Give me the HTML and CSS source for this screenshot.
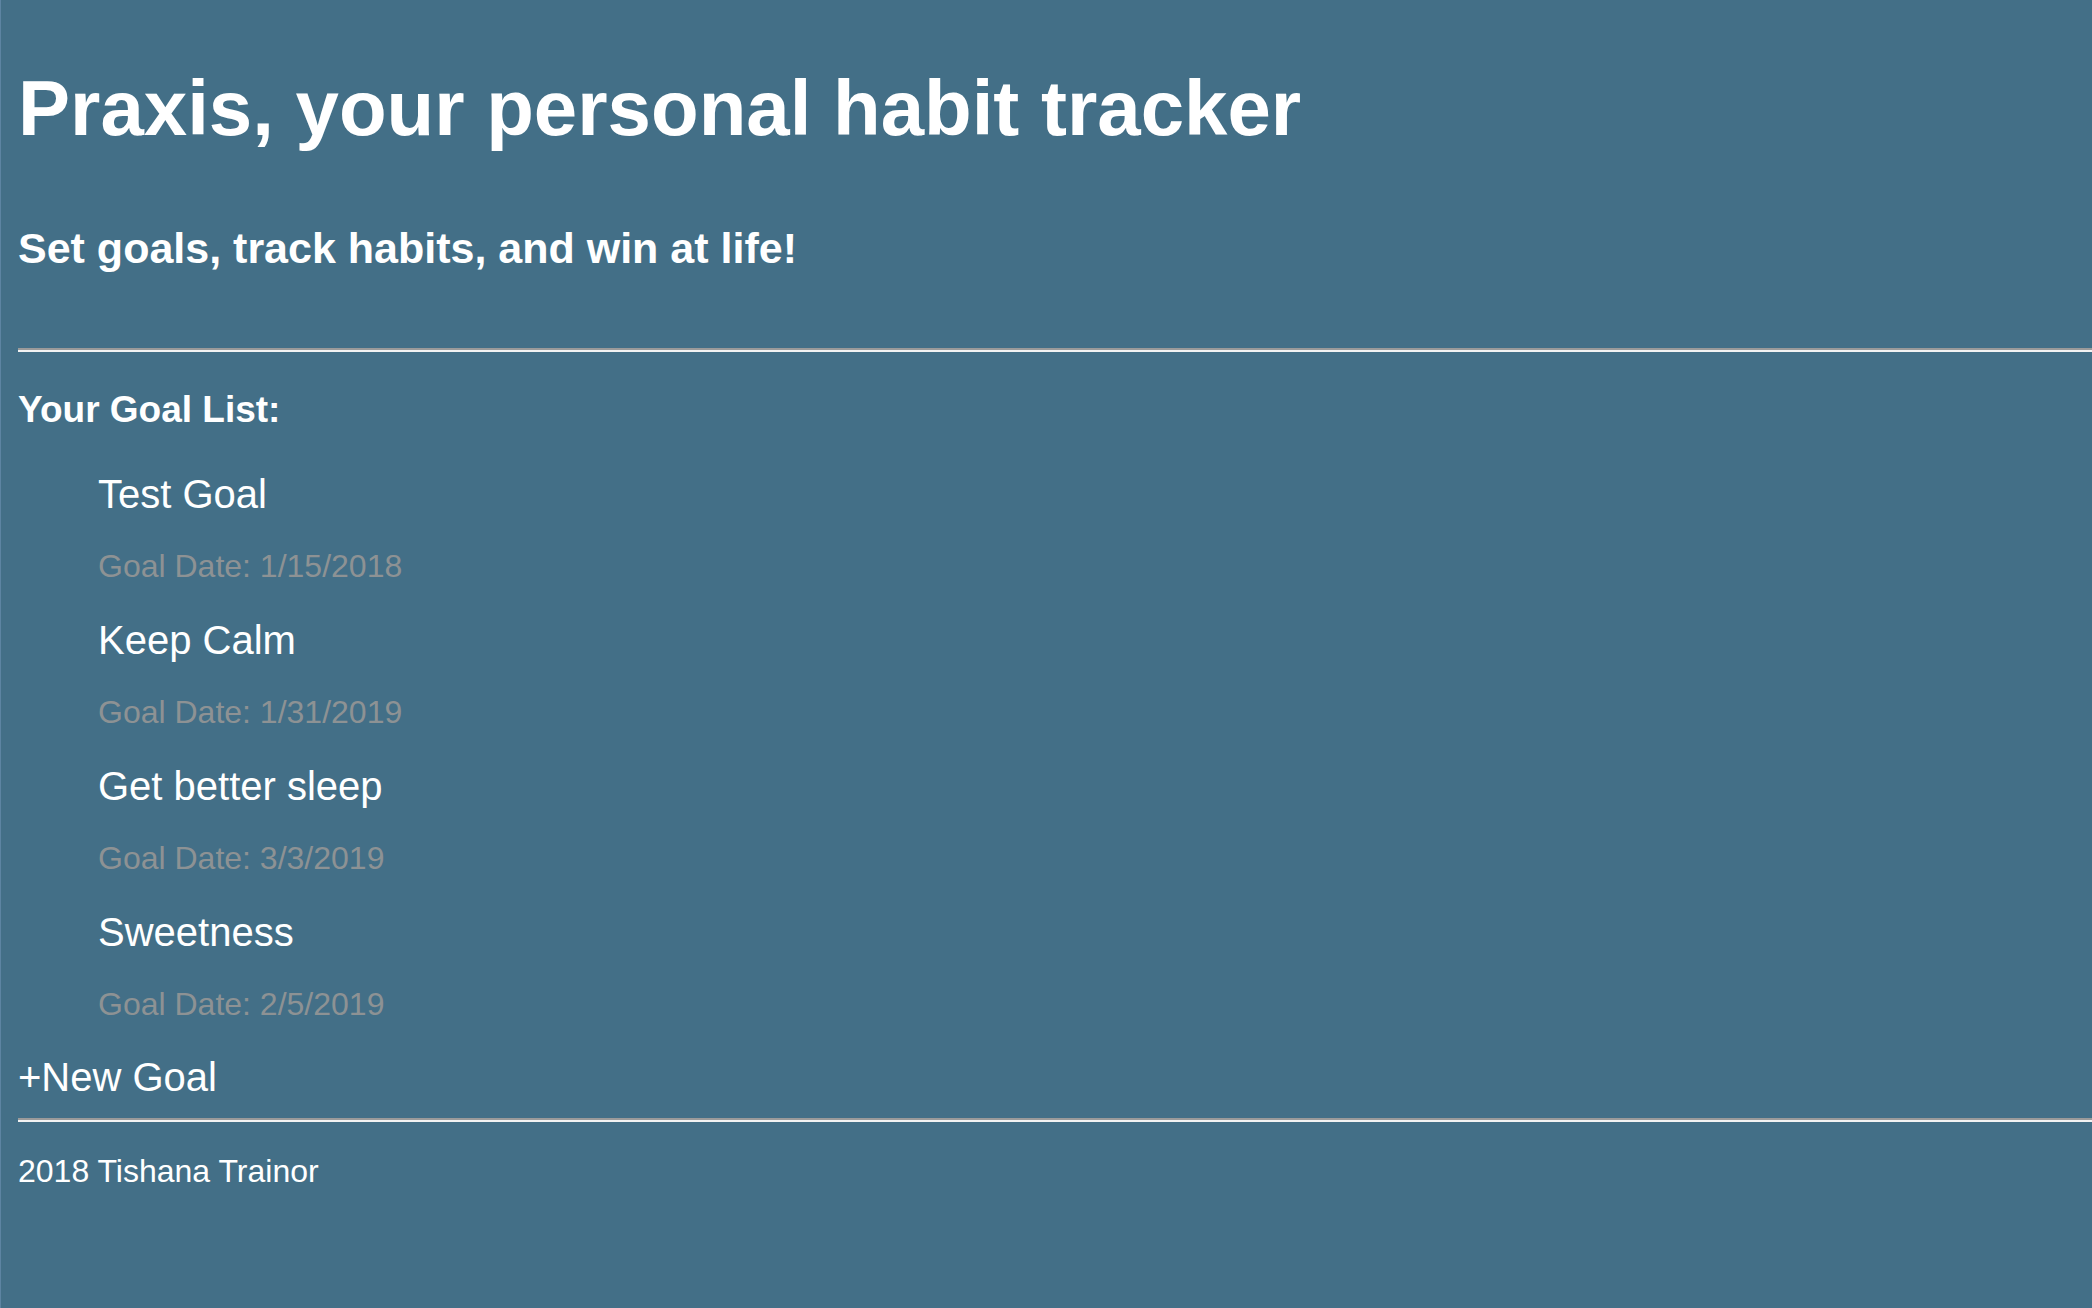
FILE: index.html
```html
<!DOCTYPE html>
<html lang="en">
<head>
<meta charset="utf-8">
<title>Praxis</title>
<link rel="stylesheet" href="styles.css">
</head>
<body>
<header class="header">
  <h1 class="title">Praxis, your personal habit tracker</h1>
  <h2 class="subtitle">Set goals, track habits, and win at life!</h2>
</header>
<hr class="rule rule-top">
<main class="main">
  <h3 class="list-head">Your Goal List:</h3>
  <ul class="goals">
    <li class="goal">
      <div class="goal-name">Test Goal</div>
      <div class="goal-date">Goal Date: 1/15/2018</div>
    </li>
    <li class="goal">
      <div class="goal-name">Keep Calm</div>
      <div class="goal-date">Goal Date: 1/31/2019</div>
    </li>
    <li class="goal">
      <div class="goal-name">Get better sleep</div>
      <div class="goal-date">Goal Date: 3/3/2019</div>
    </li>
    <li class="goal">
      <div class="goal-name">Sweetness</div>
      <div class="goal-date">Goal Date: 2/5/2019</div>
    </li>
  </ul>
  <div class="new-goal">+New Goal</div>
</main>
<hr class="rule rule-bottom">
<footer class="footer">2018 Tishana Trainor</footer>
</body>
</html>
```
FILE: styles.css
```css
html {
  background: #436f87;
  border-left: 1px solid #5d84a2;
  min-height: 100%;
}
body {
  margin: 0;
  padding: 0 0 0 17px;
  font-family: "Liberation Sans", Arial, Helvetica, sans-serif;
  color: #ffffff;
  min-height: 1308px;
  box-sizing: border-box;
}
.header {
  padding-top: 63px;
}
.title {
  margin: 0;
  font-size: 78px;
  line-height: 90px;
  font-weight: bold;
}
.subtitle {
  margin: 70px 0 0;
  font-size: 43px;
  line-height: 50px;
  font-weight: bold;
}
.rule {
  height: 0;
  margin: 0;
  border: none;
  border-top: 2px solid #9a9a9a;
  border-bottom: 2px solid #f2f2f2;
}
.rule-top {
  margin-top: 75px;
}
.list-head {
  margin: 36px 0 0;
  font-size: 37px;
  line-height: 44px;
  font-weight: bold;
}
.goals {
  list-style: none;
  margin: 39px 0 0;
  padding: 0 0 0 80px;
}
.goal-name {
  font-size: 40px;
  line-height: 46px;
  margin-bottom: 30px;
}
.goal-date {
  font-size: 32px;
  line-height: 38px;
  color: #8d9294;
  margin-bottom: 32px;
}
.goal:last-child .goal-date {
  margin-bottom: 0;
}
.new-goal {
  margin-top: 31px;
  font-size: 40px;
  line-height: 46px;
}
.rule-bottom {
  margin-top: 18px;
}
.footer {
  margin-top: 30px;
  font-size: 32px;
  line-height: 38px;
}
```
